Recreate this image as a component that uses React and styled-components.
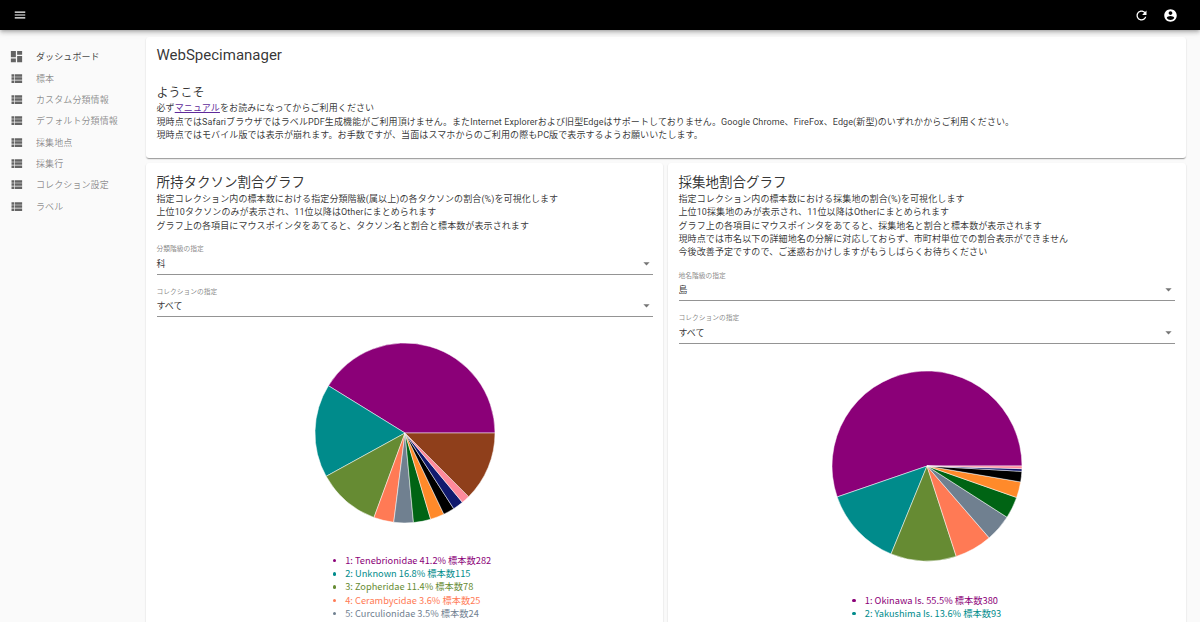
import React from 'react';
import styled, { createGlobalStyle } from 'styled-components';

const GlobalStyle = createGlobalStyle`
  html, body { margin: 0; padding: 0; height: 100%; overflow: hidden; }
  body {
    background: #fafafa;
    color: rgba(0, 0, 0, 0.8);
    font-family: Roboto, "Noto Sans CJK JP", sans-serif;
  }
`;

const Page = styled.div`
  height: 100vh;
  display: flex;
  flex-direction: column;
  overflow: hidden;
`;

const AppBar = styled.header`
  flex: none;
  height: 30px;
  background: #000;
  color: #fff;
  display: flex;
  align-items: center;
  padding: 0 22px 0 13px;
  box-shadow: 0 1.5px 3px -1px rgba(0, 0, 0, 0.2), 0 3px 4px 0 rgba(0, 0, 0, 0.14), 0 1px 8px 0 rgba(0, 0, 0, 0.12);
  position: relative;
  z-index: 2;
`;

const Spacer = styled.div`
  flex: 1;
`;

const BarIcons = styled.div`
  display: flex;
  gap: 14px;
`;

const Icon = styled.svg`
  display: block;
  flex: none;
  width: ${(p) => p.$size || 15}px;
  height: ${(p) => p.$size || 15}px;
  fill: currentColor;
`;

const Body = styled.div`
  flex: 1;
  display: flex;
  min-height: 0;
`;

const Sidebar = styled.nav`
  flex: none;
  width: 146px;
  box-sizing: border-box;
  padding: 16px 0 0 9px;
`;

const NavRow = styled.div`
  height: 21.35px;
  display: flex;
  align-items: center;
  gap: 12px;
  font-size: 9px;
  letter-spacing: 0.1px;
  color: ${(p) => (p.$active ? 'rgba(0, 0, 0, 0.75)' : 'rgba(0, 0, 0, 0.45)')};

  svg {
    color: rgba(0, 0, 0, 0.6);
  }
`;

const Main = styled.main`
  flex: 1;
  min-width: 0;
  padding: 7px 14px 0 0;
  display: flex;
  flex-direction: column;
  gap: 5px;
`;

const Card = styled.section`
  background: #fff;
  border-radius: 3px;
  box-sizing: border-box;
  padding: ${(p) => p.$padding || '10px 10.5px'};
  box-shadow: 0 1.5px 1px -1px rgba(0, 0, 0, 0.2), 0 1px 1px 0 rgba(0, 0, 0, 0.14), 0 1px 2px 0 rgba(0, 0, 0, 0.12);
`;

const AppTitle = styled.h1`
  margin: 0 0 19px;
  font-size: 15px;
  line-height: 22px;
  font-weight: 400;
`;

const WelcomeHeading = styled.h2`
  margin: 0 0 1.3px;
  font-size: 12px;
  line-height: 16px;
  font-weight: 400;
`;

const Heading = styled.h2`
  margin: 0 0 2px;
  font-size: 13.5px;
  line-height: 18px;
  font-weight: 400;
`;

const Text = styled.p`
  margin: 0;
  font-size: 9px;
  line-height: 13.3px;
  letter-spacing: 0.1px;
`;

const ManualLink = styled.a`
  color: #5f2b9a;
  text-decoration: underline;
`;

const Charts = styled.div`
  display: grid;
  grid-template-columns: 517px 517.5px;
  gap: 5px;
`;

const ChartCard = styled(Card)`
  height: 700px;
`;

const Field = styled.div`
  margin-top: ${(p) => p.$top || 13}px;
  border-bottom: 1px solid rgba(0, 0, 0, 0.42);
`;

const FieldLabel = styled.div`
  font-size: 6.75px;
  line-height: 9px;
  color: rgba(0, 0, 0, 0.5);
`;

const FieldValue = styled.div`
  height: 19.5px;
  display: flex;
  align-items: center;
  justify-content: space-between;
  font-size: 9px;
  padding-bottom: 1px;
  box-sizing: border-box;

  svg {
    color: rgba(0, 0, 0, 0.54);
    margin-right: -1px;
  }
`;

const PieWrap = styled.div`
  display: flex;
  justify-content: center;
  margin-top: ${(p) => p.$top}px;
`;

const PieSvg = styled.svg`
  display: block;
  overflow: visible;
`;

const Legend = styled.ul`
  width: fit-content;
  margin: ${(p) => p.$top}px auto 0;
  padding: 0 0 0 ${(p) => p.$indent || 0}px;
  list-style: none;
  font-family: "Noto Sans CJK JP", "Noto Sans", sans-serif;
  font-size: 9.25px;
  line-height: 13.2px;
`;

const LegendItem = styled.li`
  display: flex;
  align-items: center;
  gap: 9px;
  color: ${(p) => p.$color};

  &::before {
    content: '';
    width: 3.5px;
    height: 3.5px;
    border-radius: 50%;
    background: ${(p) => p.$color};
  }
`;

const COLORS = ['#8b0078', '#008b8b', '#668b33', '#ff7a55', '#708090', '#006414', '#ff8a2a', '#000000', '#111a6e', '#ff8a9c', '#8f3f1b'];

const PATHS = {
  menu: 'M3 18h18v-2H3v2zm0-5h18v-2H3v2zm0-7v2h18V6H3z',
  refresh: 'M17.65 6.35C16.2 4.9 14.21 4 12 4c-4.42 0-7.99 3.58-7.99 8s3.57 8 7.99 8c3.73 0 6.84-2.55 7.73-6h-2.08c-.82 2.33-3.04 4-5.65 4-3.31 0-6-2.69-6-6s2.69-6 6-6c1.66 0 3.14.69 4.22 1.78L13 11h7V4l-2.35 2.35z',
  account: 'M12 2C6.48 2 2 6.48 2 12s4.48 10 10 10 10-4.48 10-10S17.52 2 12 2zm0 3c1.66 0 3 1.34 3 3s-1.34 3-3 3-3-1.34-3-3 1.34-3 3-3zm0 14.2c-2.5 0-4.71-1.28-6-3.22.03-1.99 4-3.08 6-3.08 1.99 0 5.97 1.09 6 3.08-1.29 1.94-3.5 3.22-6 3.22z',
  dashboard: 'M3 13h8V3H3v10zm0 8h8v-6H3v6zm10 0h8V11h-8v10zm0-18v6h8V3h-8z',
  list: 'M4 14h4v-4H4v4zm0 5h4v-4H4v4zM4 9h4V5H4v4zm5 5h12v-4H9v4zm0 5h12v-4H9v4zM9 5v4h12V5H9z',
  drop: 'M7 10l5 5 5-5z',
};

const Glyph = ({ name, size }) => (
  <Icon viewBox="0 0 24 24" $size={size}>
    <path d={PATHS[name]} />
  </Icon>
);

const NAV = ['標本', 'カスタム分類情報', 'デフォルト分類情報', '採集地点', '採集行', 'コレクション設定', 'ラベル'];

const TAXON_SHARES = [41.2, 16.8, 11.4, 3.6, 3.5, 3.1, 2.5, 2.0, 1.9, 1.5, 12.5];
const PLACE_SHARES = [55.5, 13.6, 11.2, 6.4, 4.6, 3.7, 2.7, 1.8, 0.45, 0.45];

const TAXON_LEGEND = [
  '1: Tenebrionidae 41.2% 標本数282',
  '2: Unknown 16.8% 標本数115',
  '3: Zopheridae 11.4% 標本数78',
  '4: Cerambycidae 3.6% 標本数25',
  '5: Curculionidae 3.5% 標本数24',
];
const PLACE_LEGEND = ['1: Okinawa Is. 55.5% 標本数380', '2: Yakushima Is. 13.6% 標本数93'];

// slices run counter-clockwise from three o'clock
const Pie = ({ shares, radius }) => {
  const total = shares.reduce((a, b) => a + b, 0);
  let angle = 0;
  const slices = shares.map((share, i) => {
    const next = angle + (share / total) * Math.PI * 2;
    const x1 = radius * Math.cos(angle);
    const y1 = -radius * Math.sin(angle);
    const x2 = radius * Math.cos(next);
    const y2 = -radius * Math.sin(next);
    const large = next - angle > Math.PI ? 1 : 0;
    angle = next;
    return (
      <path
        key={i}
        d={`M0 0L${x1} ${y1}A${radius} ${radius} 0 ${large} 0 ${x2} ${y2}Z`}
        fill={COLORS[i]}
        stroke="#fff"
        strokeWidth="0.5"
      />
    );
  });
  return (
    <PieSvg width={radius * 2} height={radius * 2} viewBox={`${-radius} ${-radius} ${radius * 2} ${radius * 2}`}>
      {slices}
    </PieSvg>
  );
};

const SelectField = ({ label, value, top }) => (
  <Field $top={top}>
    <FieldLabel>{label}</FieldLabel>
    <FieldValue>
      {value}
      <Glyph name="drop" size={15} />
    </FieldValue>
  </Field>
);

const App = () => (
  <Page>
    <GlobalStyle />
    <AppBar>
      <Glyph name="menu" size={14} />
      <Spacer />
      <BarIcons>
        <Glyph name="refresh" />
        <Glyph name="account" />
      </BarIcons>
    </AppBar>
    <Body>
      <Sidebar>
        <NavRow $active>
          <Glyph name="dashboard" />
          ダッシュボード
        </NavRow>
        {NAV.map((item) => (
          <NavRow key={item}>
            <Glyph name="list" />
            {item}
          </NavRow>
        ))}
      </Sidebar>
      <Main>
        <Card $padding="7px 10.5px 16px">
          <AppTitle>WebSpecimanager</AppTitle>
          <WelcomeHeading>ようこそ</WelcomeHeading>
          <Text>
            必ず<ManualLink>マニュアル</ManualLink>をお読みになってからご利用ください
          </Text>
          <Text>現時点ではSafariブラウザではラベルPDF生成機能がご利用頂けません。またInternet Explorerおよび旧型Edgeはサポートしておりません。Google Chrome、FireFox、Edge(新型)のいずれかからご利用ください。</Text>
          <Text>現時点ではモバイル版では表示が崩れます。お手数ですが、当面はスマホからのご利用の際もPC版で表示するようお願いいたします。</Text>
        </Card>
        <Charts>
          <ChartCard>
            <Heading>所持タクソン割合グラフ</Heading>
            <Text>指定コレクション内の標本数における指定分類階級(属以上)の各タクソンの割合(%)を可視化します</Text>
            <Text>上位10タクソンのみが表示され、11位以降はOtherにまとめられます</Text>
            <Text>グラフ上の各項目にマウスポインタをあてると、タクソン名と割合と標本数が表示されます</Text>
            <SelectField label="分類階級の指定" value="科" top={12} />
            <SelectField label="コレクションの指定" value="すべて" />
            <PieWrap $top={26}>
              <Pie shares={TAXON_SHARES} radius={90} />
            </PieWrap>
            <Legend $top={31} $indent={15}>
              {TAXON_LEGEND.map((item, i) => (
                <LegendItem key={item} $color={COLORS[i]}>
                  {item}
                </LegendItem>
              ))}
            </Legend>
          </ChartCard>
          <ChartCard>
            <Heading>採集地割合グラフ</Heading>
            <Text>指定コレクション内の標本数における採集地の割合(%)を可視化します</Text>
            <Text>上位10採集地のみが表示され、11位以降はOtherにまとめられます</Text>
            <Text>グラフ上の各項目にマウスポインタをあてると、採集地名と割合と標本数が表示されます</Text>
            <Text>現時点では市名以下の詳細地名の分解に対応しておらず、市町村単位での割合表示ができません</Text>
            <Text>今後改善予定ですので、ご迷惑おかけしますがもうしばらくお待ちください</Text>
            <SelectField label="地名階級の指定" value="島" top={12} />
            <SelectField label="コレクションの指定" value="すべて" />
            <PieWrap $top={27}>
              <Pie shares={PLACE_SHARES} radius={95} />
            </PieWrap>
            <Legend $top={33}>
              {PLACE_LEGEND.map((item, i) => (
                <LegendItem key={item} $color={COLORS[i]}>
                  {item}
                </LegendItem>
              ))}
            </Legend>
          </ChartCard>
        </Charts>
      </Main>
    </Body>
  </Page>
);

export default App;
